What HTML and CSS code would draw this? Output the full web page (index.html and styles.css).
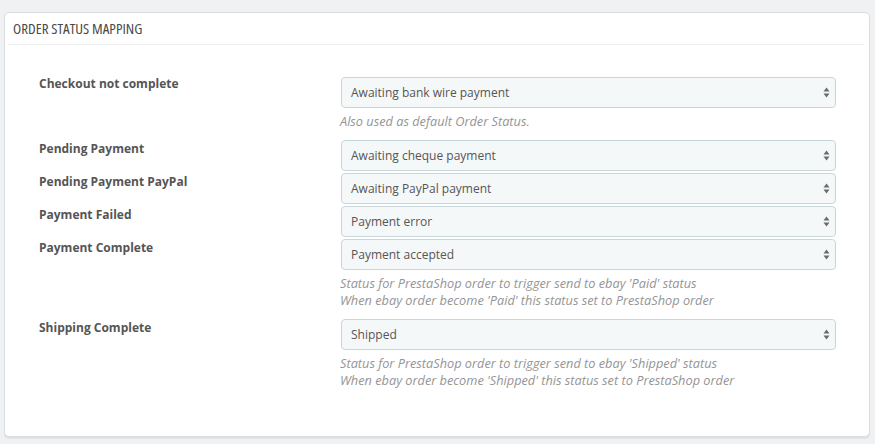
FILE: index.html
```html
<!DOCTYPE html>
<html>
<head>
<meta charset="utf-8">
<link rel="stylesheet" href="styles.css">
</head>
<body>
<div class="panel">
  <div class="panel-heading"><span class="heading-text">Order Status Mapping</span></div>
  <div class="form">
    <div class="row first">
      <div class="label">Checkout not complete</div>
      <div class="field">
        <div class="select"><span>Awaiting bank wire payment</span><svg class="caret" width="7" height="11" viewBox="0 0 7 11"><path d="M3.5 0.5 L6.5 4.5 L0.5 4.5 Z M3.5 10.5 L6.5 6.5 L0.5 6.5 Z" fill="#6b6b6b"/></svg></div>
        <p class="help">Also used as default Order Status.</p>
      </div>
    </div>
    <div class="row">
      <div class="label">Pending Payment</div>
      <div class="field">
        <div class="select"><span>Awaiting cheque payment</span><svg class="caret" width="7" height="11" viewBox="0 0 7 11"><path d="M3.5 0.5 L6.5 4.5 L0.5 4.5 Z M3.5 10.5 L6.5 6.5 L0.5 6.5 Z" fill="#6b6b6b"/></svg></div>
      </div>
    </div>
    <div class="row">
      <div class="label">Pending Payment PayPal</div>
      <div class="field">
        <div class="select"><span>Awaiting PayPal payment</span><svg class="caret" width="7" height="11" viewBox="0 0 7 11"><path d="M3.5 0.5 L6.5 4.5 L0.5 4.5 Z M3.5 10.5 L6.5 6.5 L0.5 6.5 Z" fill="#6b6b6b"/></svg></div>
      </div>
    </div>
    <div class="row">
      <div class="label">Payment Failed</div>
      <div class="field">
        <div class="select"><span>Payment error</span><svg class="caret" width="7" height="11" viewBox="0 0 7 11"><path d="M3.5 0.5 L6.5 4.5 L0.5 4.5 Z M3.5 10.5 L6.5 6.5 L0.5 6.5 Z" fill="#6b6b6b"/></svg></div>
      </div>
    </div>
    <div class="row">
      <div class="label">Payment Complete</div>
      <div class="field">
        <div class="select"><span>Payment accepted</span><svg class="caret" width="7" height="11" viewBox="0 0 7 11"><path d="M3.5 0.5 L6.5 4.5 L0.5 4.5 Z M3.5 10.5 L6.5 6.5 L0.5 6.5 Z" fill="#6b6b6b"/></svg></div>
        <p class="help">Status for PrestaShop order to trigger send to ebay 'Paid' status<br>When ebay order become 'Paid' this status set to PrestaShop order</p>
      </div>
    </div>
    <div class="row">
      <div class="label">Shipping Complete</div>
      <div class="field">
        <div class="select"><span>Shipped</span><svg class="caret" width="7" height="11" viewBox="0 0 7 11"><path d="M3.5 0.5 L6.5 4.5 L0.5 4.5 Z M3.5 10.5 L6.5 6.5 L0.5 6.5 Z" fill="#6b6b6b"/></svg></div>
        <p class="help">Status for PrestaShop order to trigger send to ebay 'Shipped' status<br>When ebay order become 'Shipped' this status set to PrestaShop order</p>
      </div>
    </div>
  </div>
</div>
</body>
</html>
```

FILE: styles.css
```css
html, body {
  margin: 0;
  padding: 0;
}
body {
  background: #eff1f2;
  font-family: "Open Sans", "Liberation Sans", sans-serif;
  font-size: 12px;
  color: #555;
  padding: 12px 5px 0 4px;
  height: 444px;
  box-sizing: border-box;
}
.panel {
  background: #fff;
  border: 1px solid #d8dde0;
  border-radius: 5px;
  box-shadow: 0 2px 0 rgba(0, 0, 0, 0.06);
  height: 425px;
  box-sizing: border-box;
  padding: 0 5px 0 3px;
}
.panel-heading {
  height: 31px;
  line-height: 31px;
  border-bottom: 1px solid #eee;
  padding-left: 5px;
  color: #4a4a4a;
}
.heading-text {
  font-family: "Open Sans", sans-serif;
  font-stretch: 75%;
  font-size: 15px;
  text-transform: uppercase;
}
.form {
  padding-top: 32px;
}
.row {
  display: grid;
  grid-template-columns: 305px 495px;
  column-gap: 28px;
  margin-bottom: 2px;
}
.label {
  padding-left: 31px;
  padding-top: 1px;
  font-weight: 700;
  line-height: 16px;
  color: #555;
}
.first .label {
  margin-top: -2px;
}
.select {
  position: relative;
  height: 31px;
  box-sizing: border-box;
  border: 1px solid #c7d6db;
  border-radius: 4px;
  background: #f5f8f9;
  padding-left: 9px;
  line-height: 29px;
  color: #555;
}
.caret {
  position: absolute;
  right: 5px;
  top: 9px;
}
.help {
  margin: 5px 0 8px -1px;
  font-size: 12.75px;
  line-height: 17px;
  font-style: italic;
  color: #959595;
}
```
